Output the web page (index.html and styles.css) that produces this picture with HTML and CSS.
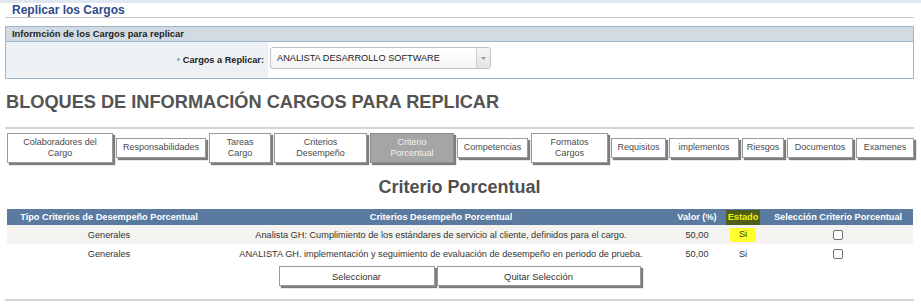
FILE: index.html
```html
<!DOCTYPE html>
<html lang="es">
<head>
  <meta charset="UTF-8">
  <title>Replicar los Cargos</title>
  <link rel="stylesheet" href="styles.css">
</head>
<body>
  <div class="franja"></div>
  <div class="pagina">
    <h1 class="titulo">Replicar los Cargos</h1>

    <div class="panel">
      <div class="panel-cab">Informción de los Cargos para replicar</div>
      <div class="panel-cuerpo">
        <div class="etiqueta"><span class="req">*</span> Cargos a Replicar:</div>
        <div class="campo">
          <div class="combo">
            <span class="combo-texto">ANALISTA DESARROLLO SOFTWARE</span>
            <span class="combo-flecha">
              <svg width="5" height="3" viewBox="0 0 5 3"><path d="M0 0h5L2.5 3z" fill="#999"/></svg>
            </span>
          </div>
        </div>
      </div>
    </div>

    <h2 class="bloques">BLOQUES DE INFORMACIÓN CARGOS PARA REPLICAR</h2>
    <hr class="linea">

    <div class="pestanas">
      <div class="pestana">Colaboradores del<br>Cargo</div>
      <div class="pestana">Responsabilidades</div>
      <div class="pestana">Tareas<br>Cargo</div>
      <div class="pestana">Criterios<br>Desempeño</div>
      <div class="pestana activa">Criterio<br>Porcentual</div>
      <div class="pestana">Competencias</div>
      <div class="pestana">Formatos<br>Cargos</div>
      <div class="pestana">Requisitos</div>
      <div class="pestana">implementos</div>
      <div class="pestana">Riesgos</div>
      <div class="pestana">Documentos</div>
      <div class="pestana">Examenes</div>
    </div>

    <h3 class="subtitulo">Criterio Porcentual</h3>

    <table class="grilla">
      <colgroup>
        <col class="c-tipo">
        <col class="c-criterio">
        <col class="c-valor">
        <col class="c-estado">
        <col class="c-sel">
      </colgroup>
      <thead>
        <tr>
          <th>Tipo Criterios de Desempeño Porcentual</th>
          <th>Criterios Desempeño Porcentual</th>
          <th>Valor (%)</th>
          <th><span class="marca-cab">Estado</span></th>
          <th>Selección Criterio Porcentual</th>
        </tr>
      </thead>
      <tbody>
        <tr class="par">
          <td>Generales</td>
          <td>Analista GH: Cumplimiento de los estándares de servicio al cliente, definidos para el cargo.</td>
          <td>50,00</td>
          <td><span class="marca">Si</span></td>
          <td><input type="checkbox" class="check"></td>
        </tr>
        <tr>
          <td>Generales</td>
          <td>ANALISTA GH. implementación y seguimiento de evaluación de desempeño en periodo de prueba.</td>
          <td>50,00</td>
          <td>Si</td>
          <td><input type="checkbox" class="check"></td>
        </tr>
      </tbody>
    </table>

    <div class="botones">
      <button class="boton b-sel">Seleccionar</button>
      <button class="boton b-quitar">Quitar Selección</button>
    </div>

    <hr class="linea final">
  </div>
</body>
</html>
```

FILE: styles.css
```css
html, body {
  margin: 0;
  padding: 0;
  background: #ffffff;
  font-family: 'Liberation Sans', Arial, sans-serif;
  color: #333333;
}

.franja {
  height: 3px;
  background: #dfe7f1;
}

.pagina {
  padding: 0 7px 0 5px;
}

.titulo {
  margin: 0;
  padding: 1px 0 0 7px;
  height: 13px;
  line-height: 13px;
  font-size: 12px;
  font-weight: bold;
  color: #2d4b8b;
  border-bottom: 1px solid #c9c9c9;
}

/* panel de informacion */
.panel {
  margin-top: 8px;
  border: 1px solid #9db5cd;
}

.panel-cab {
  height: 14px;
  line-height: 14px;
  padding-left: 6px;
  background: #d2dbe3;
  border-bottom: 1px solid #9db5cd;
  font-size: 9.4px;
  font-weight: bold;
  color: #1e1e1e;
}

.panel-cuerpo {
  display: flex;
  height: 36px;
}

.etiqueta {
  width: 258px;
  padding-right: 4px;
  background: #eef1f4;
  display: flex;
  align-items: center;
  justify-content: flex-end;
  gap: 3px;
  font-size: 9.2px;
  font-weight: bold;
  color: #222222;
}

.req {
  color: #5b7fb0;
  font-size: 8px;
}

.campo {
  flex: 1;
  display: flex;
  align-items: center;
  padding: 0 0 4px 2px;
}

.combo {
  display: flex;
  width: 219px;
  height: 20px;
  border: 1px solid #c3c3c3;
  border-radius: 3px;
  background: linear-gradient(#ffffff, #f4f4f4);
  font-size: 9.2px;
  color: #222222;
}

.combo-texto {
  flex: 1;
  line-height: 20px;
  padding-left: 6px;
}

.combo-flecha {
  width: 13px;
  border-left: 1px solid #cfcfcf;
  background: linear-gradient(#f7f7f7, #e2e2e2);
  border-radius: 0 3px 3px 0;
  display: flex;
  align-items: center;
  justify-content: center;
}

.bloques {
  margin: 12px 0 0 1px;
  height: 22px;
  line-height: 22px;
  font-size: 18.2px;
  font-weight: bold;
  color: #545454;
}

.linea {
  margin: 14px 0 0 0;
  border: 0;
  border-top: 2px solid #d4d4d4;
  height: 0;
}

/* pestañas */
.pestanas {
  margin: 3px 0 0 2px;
  display: grid;
  grid-template-columns: 106px 90px 62px 93px 84px 71px 77px 55px 70px 42px 66px 58px;
  column-gap: 3px;
  align-items: center;
  height: 32px;
}

.pestana {
  box-sizing: border-box;
  min-height: 20px;
  padding: 3px 2px 3px;
  background: #ffffff;
  border: 1px solid #9a9a9a;
  box-shadow: 2px 2px 1px #7d7d7d;
  text-align: center;
  font-size: 9px;
  line-height: 11px;
  color: #4a4a4a;
}

.pestana.activa {
  background: #a5a5a5;
  border-color: #8c8c8c;
  color: #f3f3f3;
}

.subtitulo {
  margin: 12px 0 0 0;
  height: 22px;
  line-height: 22px;
  text-align: center;
  font-size: 18px;
  font-weight: bold;
  color: #4f4f4f;
}

/* tabla de criterios */
.grilla {
  margin: 11px 0 0 2px;
  width: 906px;
  border-collapse: collapse;
  table-layout: fixed;
  font-size: 9.2px;
}

.c-tipo { width: 204px; }
.c-criterio { width: 460px; }
.c-valor { width: 52px; }
.c-estado { width: 40px; }
.c-sel { width: 150px; }

.grilla th {
  height: 16px;
  padding: 0;
  background: #5a7a9f;
  color: #ffffff;
  font-weight: bold;
  text-align: center;
}

.grilla td {
  height: 19px;
  padding: 0;
  text-align: center;
  color: #333333;
}

.grilla tr.par td {
  background: #f4f3ef;
}

.marca-cab {
  display: inline-block;
  padding: 2px 2px 3px;
  background: #4f5d1a;
  color: #f2f200;
}

.marca {
  display: inline-block;
  padding: 1px 9px 3px;
  border-radius: 0 0 4px 2px;
  background: #ffff2e;
  color: #3c3c00;
}

.check {
  appearance: none;
  margin: 3px 0 0 0;
  width: 10px;
  height: 10px;
  border: 1px solid #707070;
  border-radius: 2px;
  background: #ffffff;
}

.botones {
  margin-top: 3px;
  display: flex;
  justify-content: center;
  gap: 2px;
}

.boton {
  height: 20px;
  padding: 0;
  background: #ffffff;
  border: 1px solid #9a9a9a;
  box-shadow: 2px 2px 1px #7d7d7d;
  font-family: 'Liberation Sans', Arial, sans-serif;
  font-size: 9.4px;
  color: #333333;
}

.b-sel { width: 156px; }
.b-quitar { width: 204px; }

.final {
  margin-top: 13px;
}
```
